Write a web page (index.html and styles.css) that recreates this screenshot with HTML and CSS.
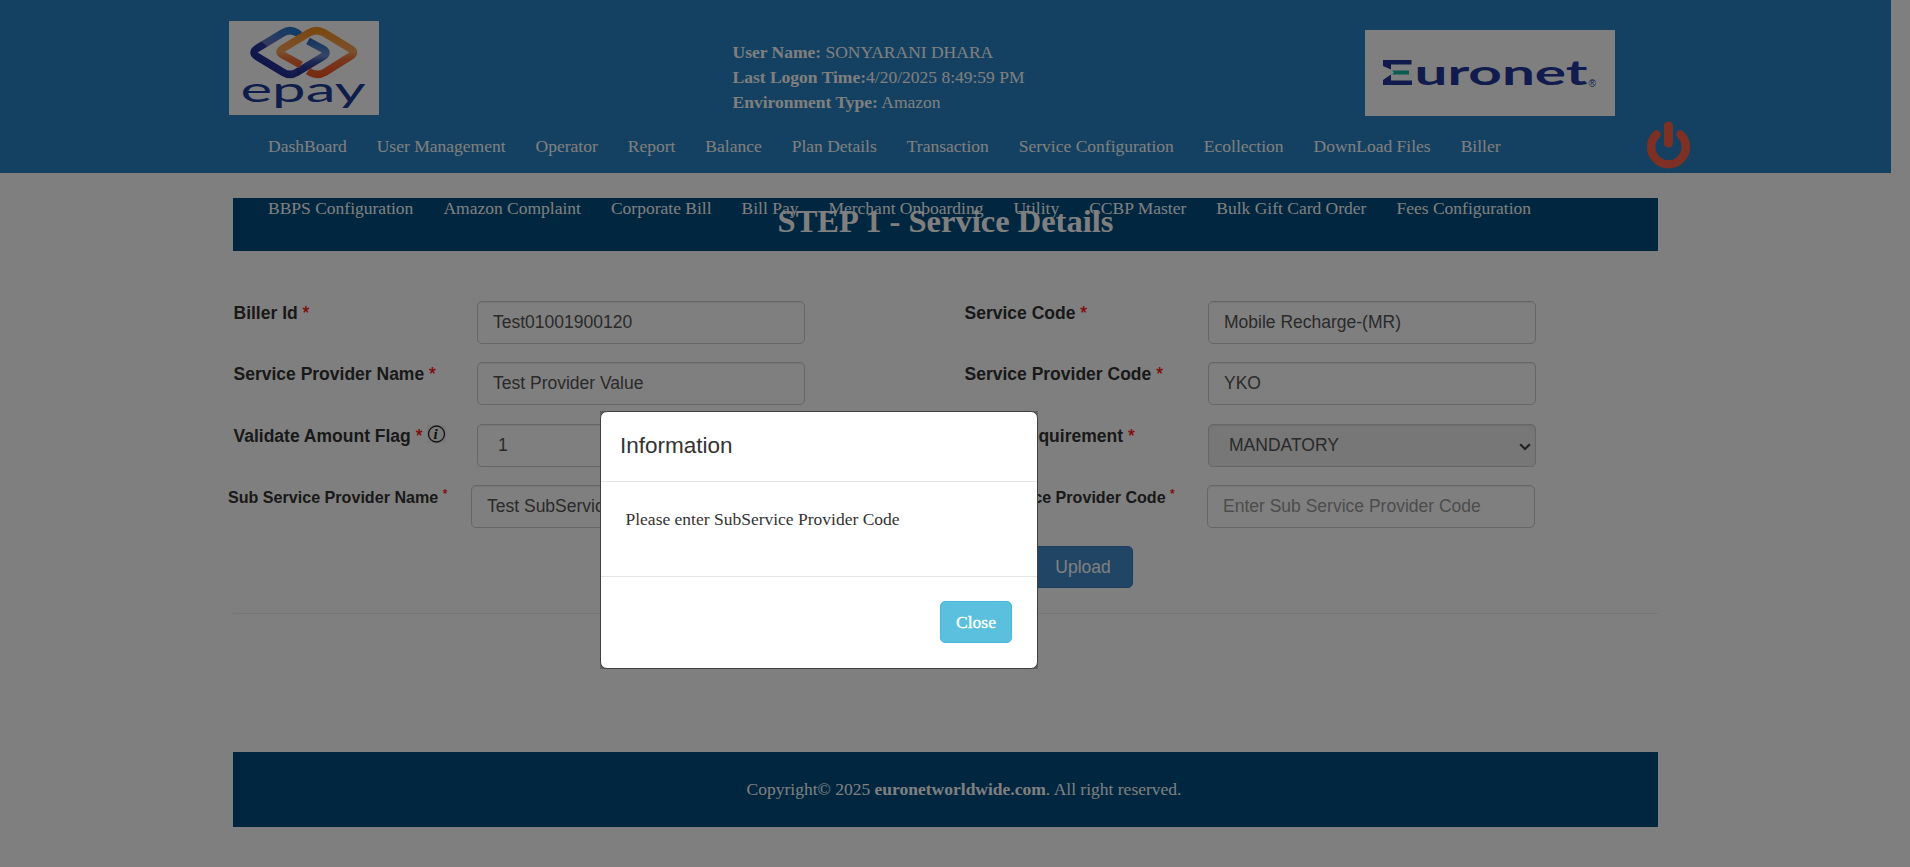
FILE: index.html
```html
<!DOCTYPE html>
<html lang="en">
<head>
<meta charset="utf-8">
<title>Service Details</title>
<link rel="stylesheet" href="styles.css">
</head>
<body>
<header class="header">
  <div class="brand-row">
    <svg class="epay" width="150" height="94" viewBox="0 0 150 94">
      <defs>
        <linearGradient id="gb" gradientUnits="userSpaceOnUse" x1="30" y1="50" x2="66" y2="8"><stop offset="0" stop-color="#1c2590"/><stop offset=".42" stop-color="#2b3a9c"/><stop offset=".45" stop-color="#6c74bc"/><stop offset="1" stop-color="#1c78cc"/></linearGradient>
        <linearGradient id="gr" gradientUnits="userSpaceOnUse" x1="0" y1="54" x2="0" y2="16"><stop offset="0" stop-color="#1c2590"/><stop offset=".35" stop-color="#3a50a8"/><stop offset=".5" stop-color="#6c8cd0"/><stop offset="1" stop-color="#1f66b8"/></linearGradient>
        <linearGradient id="go" gradientUnits="userSpaceOnUse" x1="0" y1="54" x2="0" y2="8"><stop offset="0" stop-color="#ee5524"/><stop offset=".35" stop-color="#f0703a"/><stop offset=".5" stop-color="#f5a05c"/><stop offset="1" stop-color="#f5901c"/></linearGradient>
      </defs>
      <rect width="150" height="94" fill="#fff"/>
      <path d="M71 14L68 11.800Q61 7.500 54 11.800L28 27.500Q22 31.500 28 35.500L54 51.200Q61 55.500 68 51.200" fill="none" stroke="url(#gb)" stroke-width="7.500"/>
      <path d="M79 20L94 28Q100 31.500 94 35.500L67.500 51.500" fill="none" stroke="url(#gr)" stroke-width="7.500"/>
      <path d="M72 44L54 34Q48 31 54 27.500L80 11.800Q87.500 7.500 95 11.800L121 27.500Q128 31.500 121 35.500L96 51.200Q87.500 56 79 50" fill="none" stroke="url(#go)" stroke-width="7.500"/>
      <text class="epay-word" x="11.500" y="81" textLength="125" lengthAdjust="spacingAndGlyphs">epay</text>
    </svg>
    <div class="user-info">
      <div><b>User Name:</b> SONYARANI DHARA</div>
      <div><b>Last Logon Time:</b>4/20/2025 8:49:59 PM</div>
      <div><b>Environment Type:</b> Amazon</div>
    </div>
    <svg class="euronet" width="250" height="86" viewBox="0 0 250 86">
      <rect width="250" height="86" fill="#fff"/>
      <path d="M18 30H46.500V34.500H26V39.500L18 36ZM18 55V50L26 44.500V50.500H47V55Z" fill="#24379a"/>
      <path d="M27 40.500H44V44.500H27L29 42.500Z" fill="#10b8a4"/>
      <text class="euronet-word" x="49.500" y="55" textLength="173" lengthAdjust="spacingAndGlyphs">uronet</text>
      <text class="euronet-reg" x="223.500" y="56.500">®</text>
    </svg>
  </div>
  <nav class="nav">
    <div class="nav-row"><a>DashBoard</a><a>User Management</a><a>Operator</a><a>Report</a><a>Balance</a><a>Plan Details</a><a>Transaction</a><a>Service Configuration</a><a>Ecollection</a><a>DownLoad Files</a><a>Biller</a></div>
    <div class="nav-row"><a>BBPS Configuration</a><a>Amazon Complaint</a><a>Corporate Bill</a><a>Bill Pay</a><a>Merchant Onboarding</a><a>Utility</a><a>CCBP Master</a><a>Bulk Gift Card Order</a><a>Fees Configuration</a></div>
  </nav>
  <svg class="power" width="44" height="49" viewBox="0 0 44 49">
    <path d="M10.500 13.500A17.300 17.300 0 1 0 34.500 13.500" fill="none" stroke="#ff6048" stroke-width="8.500" stroke-linecap="round"/>
    <path d="M22.500 5V22" stroke="#ff6048" stroke-width="9" stroke-linecap="round"/>
  </svg>
</header>
<main class="page">
  <h1 class="title">STEP 1 - Service Details</h1>
  <div class="form">
    <label class="label">Biller Id <i>*</i></label><div class="control">Test01001900120</div>
    <label class="label">Service Code <i>*</i></label><div class="control">Mobile Recharge-(MR)</div>
    <label class="label">Service Provider Name <i>*</i></label><div class="control">Test Provider Value</div>
    <label class="label">Service Provider Code <i>*</i></label><div class="control">YKO</div>
    <label class="label">Validate Amount Flag <i>*</i><svg class="info" width="19" height="18" viewBox="0 0 19 18"><rect width="19" height="18" fill="#f2f2f2"/><circle cx="9.500" cy="9" r="8" fill="none" stroke="#222" stroke-width="1.300"/><text class="info-i" x="6.500" y="14">i</text></svg></label><div class="control select">1</div>
    <label class="label">Fetch Requirement <i>*</i></label><div class="control select disabled">MANDATORY<svg class="chevron" width="12" height="8" viewBox="0 0 12 8"><path d="M1.200 1.200L6 6L10.800 1.200" fill="none" stroke="#444" stroke-width="2.200"/></svg></div>
    <label class="label sub">Sub Service Provider Name <i>*</i></label><div class="control sub-left">Test SubService</div>
    <label class="label sub">Sub Service Provider Code <i>*</i></label><div class="control placeholder sub-right">Enter Sub Service Provider Code</div>
  </div>
  <div class="actions"><button class="upload">Upload</button></div>
  <hr class="rule">
  <footer class="footer">Copyright© 2025 <b>euronetworldwide.com</b>. All right reserved.</footer>
</main>
<div class="backdrop">
  <div class="modal-box"><section class="modal">
    <h2 class="modal-head">Information</h2>
    <p class="modal-body">Please enter SubService Provider Code</p>
    <div class="modal-foot"><button class="close">Close</button></div>
  </section></div>
</div>
</body>
</html>
```

FILE: styles.css
```css
* { box-sizing: border-box; }
html, body { height: 867px; overflow: hidden; }
body { margin: 0; background: #fff; color: #333; font: 17.5px/25px "Liberation Serif", serif; }

.header { position: relative; z-index: 1; width: 1891px; height: 173px; background: #2882c2; color: #fff; }
.brand-row { display: flex; align-items: flex-start; height: 115px; padding-left: 229px; }
.epay { margin-top: 21px; }
.epay-word { font: 34px Lato, sans-serif; fill: #1f3b94; }
.user-info { width: 632px; margin: 40px 0 0 353.5px; white-space: nowrap; }
.euronet { margin-top: 30px; }
.euronet-word { font: 700 34.5px Lato, sans-serif; fill: #24379a; }
.euronet-reg { font: 10px "Liberation Sans", sans-serif; fill: #24379a; }
.nav { padding: 0 0 0 268px; white-space: nowrap; }
.nav-row { display: flex; gap: 30px; height: 62px; padding-top: 19px; }
.power { position: absolute; left: 1646px; top: 120.5px; }

.page { width: 1425px; margin: 25px 0 0 233px; }
.title { height: 53px; margin: 0; padding-top: 5px; background: #004c80; color: #fff; font-size: 32.5px; line-height: 36px; text-align: center; }
.form { display: grid; grid-template-columns: 244px 487px 244px 328px; grid-template-rows: 61px 62px 61px 61px; margin-top: 50px; font-family: "Liberation Sans", sans-serif; }
.label { padding-left: .5px; color: #333; font-weight: 700; white-space: nowrap; }
.label i { color: #f00; font-style: normal; font-weight: 400; -webkit-text-stroke: .2px #f00; }
.info { margin-left: 5px; vertical-align: -1px; }
.info-i { font: italic 700 15px "Liberation Serif", serif; fill: #222; }
.control { position: relative; width: 328px; height: 43px; padding: 8px 15px; border: 1px solid #ccc; border-radius: 5px; box-shadow: inset 0 1px 1px rgba(0,0,0,.075); color: #555; white-space: nowrap; overflow: hidden; }
.select { padding-left: 20px; }
.disabled { background: #eee; }
.chevron { position: absolute; right: 4px; top: 18px; }
.placeholder { color: #999; }
.sub { margin-left: -5.5px; font-size: 16.1px; }
.sub i { position: relative; top: -5px; font-size: 12px; }
.sub-left { margin-left: -6px; }
.sub-right { margin-left: -1px; }
.actions { padding-left: 800px; }
.upload { display: block; width: 100px; height: 42px; border: 1px solid #357ebd; border-radius: 5px; background: #428bca; color: #fff; font: 17.5px/25px "Liberation Sans", sans-serif; }
.rule { height: 1px; margin: 25px 0 138px; border: 0; background: #eee; }
.footer { height: 75px; padding: 25px 0 0 37px; background: #004c80; color: #fff; text-align: center; }

.backdrop { position: fixed; inset: 0; z-index: 2; padding: 411px 0 0 600px; background: rgba(0,0,0,.5); }
.modal-box { width: 438px; height: 258px; background: #606060; }
.modal { height: 258px; border: 1px solid #404040; border-radius: 7px; background: #fff; overflow: hidden; }
.modal-head { height: 70px; margin: 0; padding: 20px 19px; border-bottom: 1px solid #e5e5e5; font: 22.5px/27px "Liberation Sans", sans-serif; }
.modal-body { height: 95px; margin: 0; padding: 25px 24.5px; border-bottom: 1px solid #e5e5e5; }
.modal-foot { display: flex; justify-content: flex-end; padding: 24px 25px; }
.close { width: 72px; height: 42px; border: 1px solid #46b8da; border-radius: 5px; background: #5bc0de; color: #fff; font: 17.5px/25px "Liberation Serif", serif; -webkit-text-stroke: .4px #fff; }
```
